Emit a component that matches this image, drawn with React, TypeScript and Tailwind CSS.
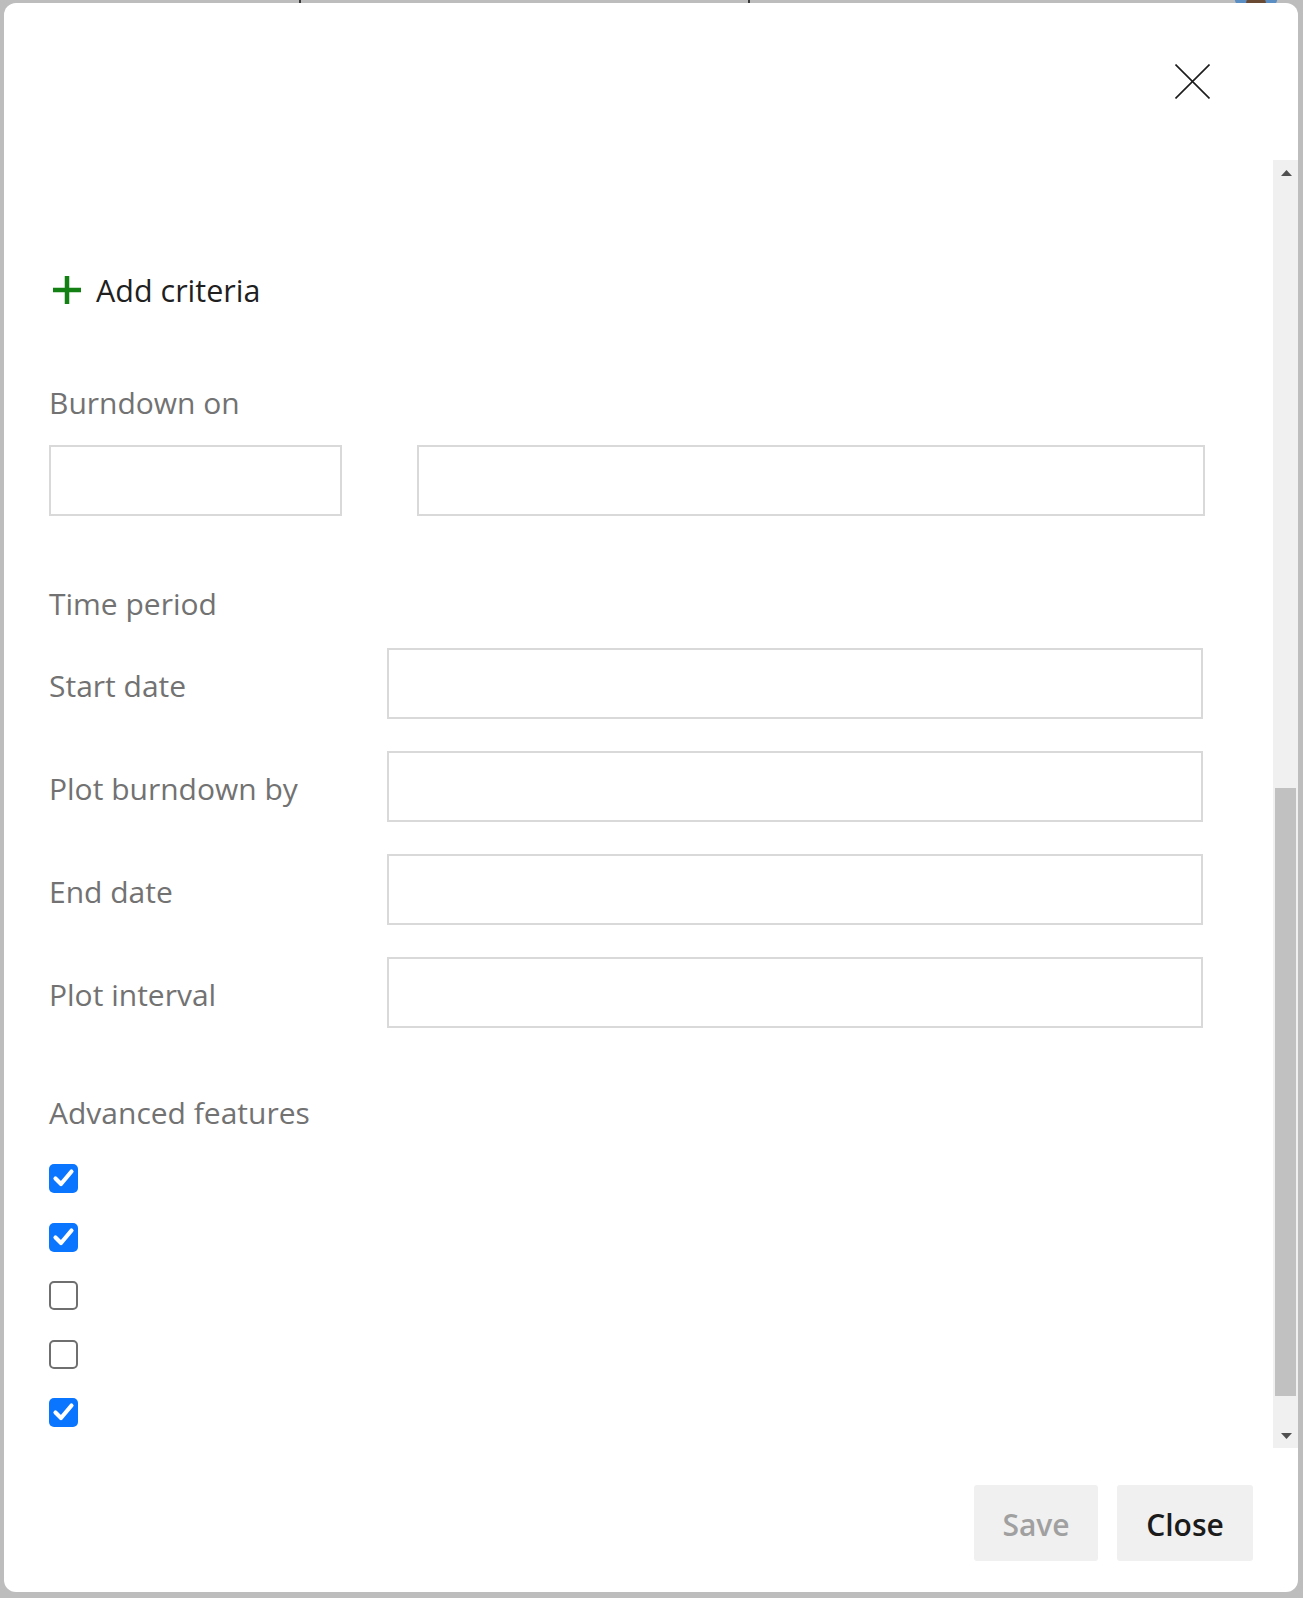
const font = { fontFamily: '"Open Sans", "Noto Sans", "Liberation Sans", sans-serif' };

function Label({ children }: { children: React.ReactNode }) {
  return <div className="text-[30px] leading-[40px] text-[#727272]">{children}</div>;
}

function Field({ className = '' }: { className?: string }) {
  return <div className={`h-[71px] border-2 border-[#d9d9d9] bg-white ${className}`} />;
}

function FieldRow({ label }: { label: string }) {
  return (
    <div className="flex h-[71px]">
      <div className="w-[338px] pt-[18px]">
        <div className="text-[30px] leading-[40px] text-[#727272]">{label}</div>
      </div>
      <Field className="flex-1" />
    </div>
  );
}

function Checkbox({ checked }: { checked: boolean }) {
  if (checked) {
    return (
      <div className="flex h-[29px] w-[29px] items-center justify-center rounded-[5px] bg-[#0a75ff]">
        <svg width="23" height="23" viewBox="0 0 23 23">
          <path d="M3.5 11.5 L9 17 L19.5 4.5" fill="none" stroke="#ffffff" strokeWidth="4.2" strokeLinecap="round" strokeLinejoin="round" />
        </svg>
      </div>
    );
  }
  return <div className="h-[29px] w-[29px] rounded-[5px] border-[2.5px] border-[#6f6f6f] bg-white" />;
}

function Scrollbar() {
  return (
    <div className="flex w-[25px] flex-col bg-[#f1f0f1]">
      <div className="flex h-[25px] items-center justify-center pl-[1px]">
        <svg width="11" height="6" viewBox="0 0 11 6">
          <polygon points="5.5,0 11,6 0,6" fill="#505050" />
        </svg>
      </div>
      <div className="h-[603px]" />
      <div className="ml-[2px] h-[608px] w-[21px] bg-[#c1c1c1]" />
      <div className="flex-1" />
      <div className="flex h-[25px] items-center justify-center pl-[1px]">
        <svg width="11" height="6" viewBox="0 0 11 6">
          <polygon points="0,0 11,0 5.5,6" fill="#505050" />
        </svg>
      </div>
    </div>
  );
}

export default function App() {
  const checks = [true, true, false, false, true];
  return (
    <div
      className="relative h-[1598px] w-full overflow-hidden bg-[#bdbdbd] pb-[6px] pl-[4px] pr-[5px] pt-[3px]"
      style={font}
    >
      {/* page behind the dialog */}
      <div className="absolute left-[299px] top-0 h-[6px] w-[2px] bg-[#3a3a3a]" />
      <div className="absolute left-[748px] top-0 h-[6px] w-[2px] bg-[#3a3a3a]" />
      <div className="absolute left-[1234px] top-[-28px] h-[44px] w-[44px] rounded-full bg-[#5b8fc4]">
        <div className="ml-[12px] mt-[22px] h-[22px] w-[20px] rounded-full bg-[#6b4a33]" />
      </div>

      <div className="relative flex h-full flex-col rounded-[12px] bg-white">
        <div className="flex h-[157px] shrink-0 justify-end pr-[88px] pt-[61px]">
          <button className="h-[35px] w-[35px]">
            <svg width="35" height="35" viewBox="0 0 35 35">
              <path d="M0.5 0.5 L34.5 34.5 M34.5 0.5 L0.5 34.5" stroke="#1c1c1c" strokeWidth="1.6" />
            </svg>
          </button>
        </div>

        <div className="flex h-[1288px] shrink-0">
          <div className="flex-1 pl-[45px] pr-[68px]">
            <div className="ml-[4px] mt-[116px] flex h-[28px] items-center gap-[15px]">
              <svg width="28" height="28" viewBox="0 0 28 28">
                <path d="M14 0 V28 M0 14 H28" stroke="#138013" strokeWidth="4.5" />
              </svg>
              <span className="text-[30.5px] leading-[28px] text-[#1f1f1f]">Add criteria</span>
            </div>

            <div className="mt-[79px]">
              <Label>Burndown on</Label>
            </div>
            <div className="mt-[22px] flex gap-[75px]">
              <Field className="w-[293px]" />
              <Field className="flex-1" />
            </div>

            <div className="mt-[68px]">
              <Label>Time period</Label>
            </div>
            <div className="mt-[24px] flex flex-col gap-[32px] pr-[2px]">
              <FieldRow label="Start date" />
              <FieldRow label="Plot burndown by" />
              <FieldRow label="End date" />
              <FieldRow label="Plot interval" />
            </div>

            <div className="mt-[65px]">
              <Label>Advanced features</Label>
            </div>
            <div className="mt-[31px] flex flex-col gap-[29.5px]">
              {checks.map((c, i) => (
                <Checkbox key={i} checked={c} />
              ))}
            </div>
          </div>
          <Scrollbar />
        </div>

        <div className="flex flex-1 justify-end gap-[19px] pr-[45px] pt-[37px]">
          <button className="h-[76px] w-[124px] rounded-[3px] bg-[#f0f0f0] pt-[3px] text-[30px] font-semibold text-[#a0a0a0]">
            Save
          </button>
          <button className="h-[76px] w-[136px] rounded-[3px] bg-[#f0f0f0] pt-[3px] text-[30px] font-semibold text-[#1b1b1b]">
            Close
          </button>
        </div>
      </div>
    </div>
  );
}
